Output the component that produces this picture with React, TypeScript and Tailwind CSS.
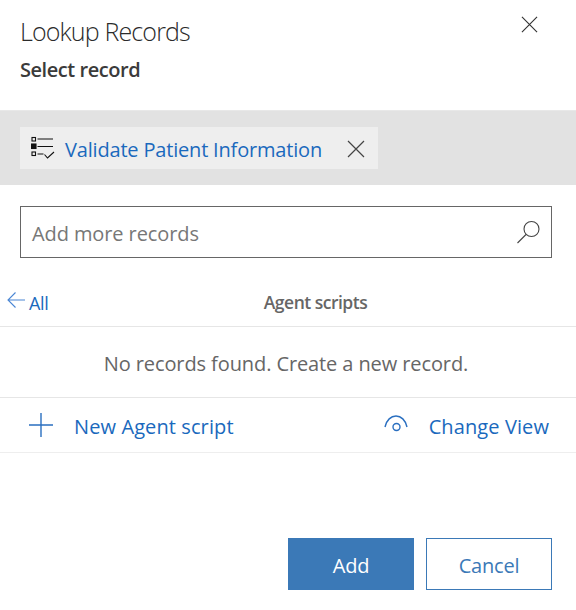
import React from 'react';

const font = "font-['Open_Sans',sans-serif]";

const Cross = ({ className, size = 18 }: { className?: string; size?: number }) => (
  <svg width={size} height={size} viewBox="0 0 18 18" fill="none" stroke="currentColor" strokeWidth="1.2" className={className}>
    <path d="M1 1l16 16M17 1L1 17" />
  </svg>
);

const App = () => {
  return (
    <div className={`w-[576px] h-[610px] bg-white flex flex-col overflow-hidden ${font}`}>
      <div className="h-[110px] shrink-0 pl-5 pr-[38px] flex justify-between">
        <div>
          <h1 className="mt-[15px] text-[25px] leading-[32px] font-light tracking-[-0.85px] text-[#2b2b2b]">Lookup Records</h1>
          <p className="mt-[9px] text-[20px] leading-[28px] font-semibold tracking-[-0.45px] text-[#3b3b3b]">Select record</p>
        </div>
        <Cross size={17} className="mt-[16px] text-[#333]" />
      </div>

      {/* Selected record */}
      <div className="h-[75px] shrink-0 bg-[#e2e2e2] border-t border-[#e8e8e8] pt-[16px] px-5">
        <div className="w-[358px] h-[42px] bg-[#eeeeee] flex items-center pl-[11px] pr-[13px]">
          <svg width="24" height="24" viewBox="0 0 24 24" fill="none" stroke="#111" strokeWidth="1.1" className="shrink-0">
            <rect x="1" y="1.500" width="3.500" height="3.500" />
            <rect x="0.500" y="8" width="4.500" height="4.500" fill="#111" />
            <rect x="1" y="16" width="3.500" height="3.500" />
            <path d="M6.500 3h15.500M6.500 10.500h15.500M6.500 18h6M13.500 18.500l3 3.500 6.500-6" />
          </svg>
          <span className="ml-[10px] pt-[3px] text-[20px] leading-[28px] tracking-[-0.18px] text-[#1a69bd] whitespace-nowrap">Validate Patient Information</span>
          <Cross className="ml-auto mt-[2px] text-[#444]" />
        </div>
      </div>

      {/* Search */}
      <div className="ml-5 mr-6 mt-[21px] h-[52px] shrink-0 border border-[#666] flex items-center pl-[11px] pr-[9px]">
        <span className="pt-[3px] text-[20px] tracking-[-0.1px] text-[#777]">Add more records</span>
        <svg width="26" height="26" viewBox="0 0 26 26" fill="none" stroke="#444" strokeWidth="1.1" className="ml-auto">
          <circle cx="15.500" cy="10" r="7.500" />
          <path d="M10 15.500L1.500 24" />
        </svg>
      </div>

      {/* Header row */}
      <div className="mt-[21px] h-[48px] shrink-0 border-b border-[#e6e6e6] relative flex items-center justify-center pl-[55px]">
        <div className="absolute left-[7px] top-[11px] flex items-start">
          <svg width="20" height="20" viewBox="0 0 20 20" fill="none" stroke="#4a86d4" strokeWidth="1.1">
            <path d="M18 10H1.500M8.500 2.500L1 10l7.500 7.500" />
          </svg>
          <span className="mt-[1px] ml-[2px] text-[18px] leading-[24px] tracking-[-0.3px] text-[#1a69bd]">All</span>
        </div>
        <span className="text-[17.500px] font-semibold tracking-[-0.5px] text-[#666]">Agent scripts</span>
      </div>

      <div className="h-[71px] shrink-0 border-b border-[#e6e6e6] flex items-center justify-center pt-[3px] text-[20px] tracking-[-0.1px] text-[#666] pr-[4px]">
        No records found. Create a new record.
      </div>

      {/* Actions */}
      <div className="h-[55px] shrink-0 border-b border-[#eeeeee] flex items-center pl-[28px] pr-[27px]">
        <svg width="26" height="26" viewBox="0 0 26 26" fill="none" stroke="#2a6fc0" strokeWidth="1.400" className="shrink-0">
          <path d="M13 1v24M1 13h24" />
        </svg>
        <span className="ml-[20px] pt-[3px] text-[20px] tracking-[0.1px] text-[#1a69bd]">New Agent script</span>
        <svg width="26" height="22" viewBox="0 0 26 22" fill="none" stroke="#2a6fc0" strokeWidth="1.400" className="ml-auto shrink-0 mb-[2px]">
          <path d="M2 14C3.500 7 8 3 13 3S22.500 7 24 14" />
          <circle cx="13.500" cy="14" r="3.500" />
        </svg>
        <span className="ml-[20px] pt-[3px] text-[20px] tracking-[0.1px] text-[#1a69bd]">Change View</span>
      </div>

      {/* Footer */}
      <div className="mt-[85px] flex justify-end gap-3 pr-6">
        <button className="w-[126px] h-[52px] pt-[3px] bg-[#3b79b7] text-white text-[20px] tracking-[-0.2px]">Add</button>
        <button className="w-[126px] h-[52px] pt-[3px] bg-white border border-[#3b79b7] text-[#3b79b7] text-[20px] tracking-[-0.2px]">Cancel</button>
      </div>
    </div>
  );
};

export default App;
